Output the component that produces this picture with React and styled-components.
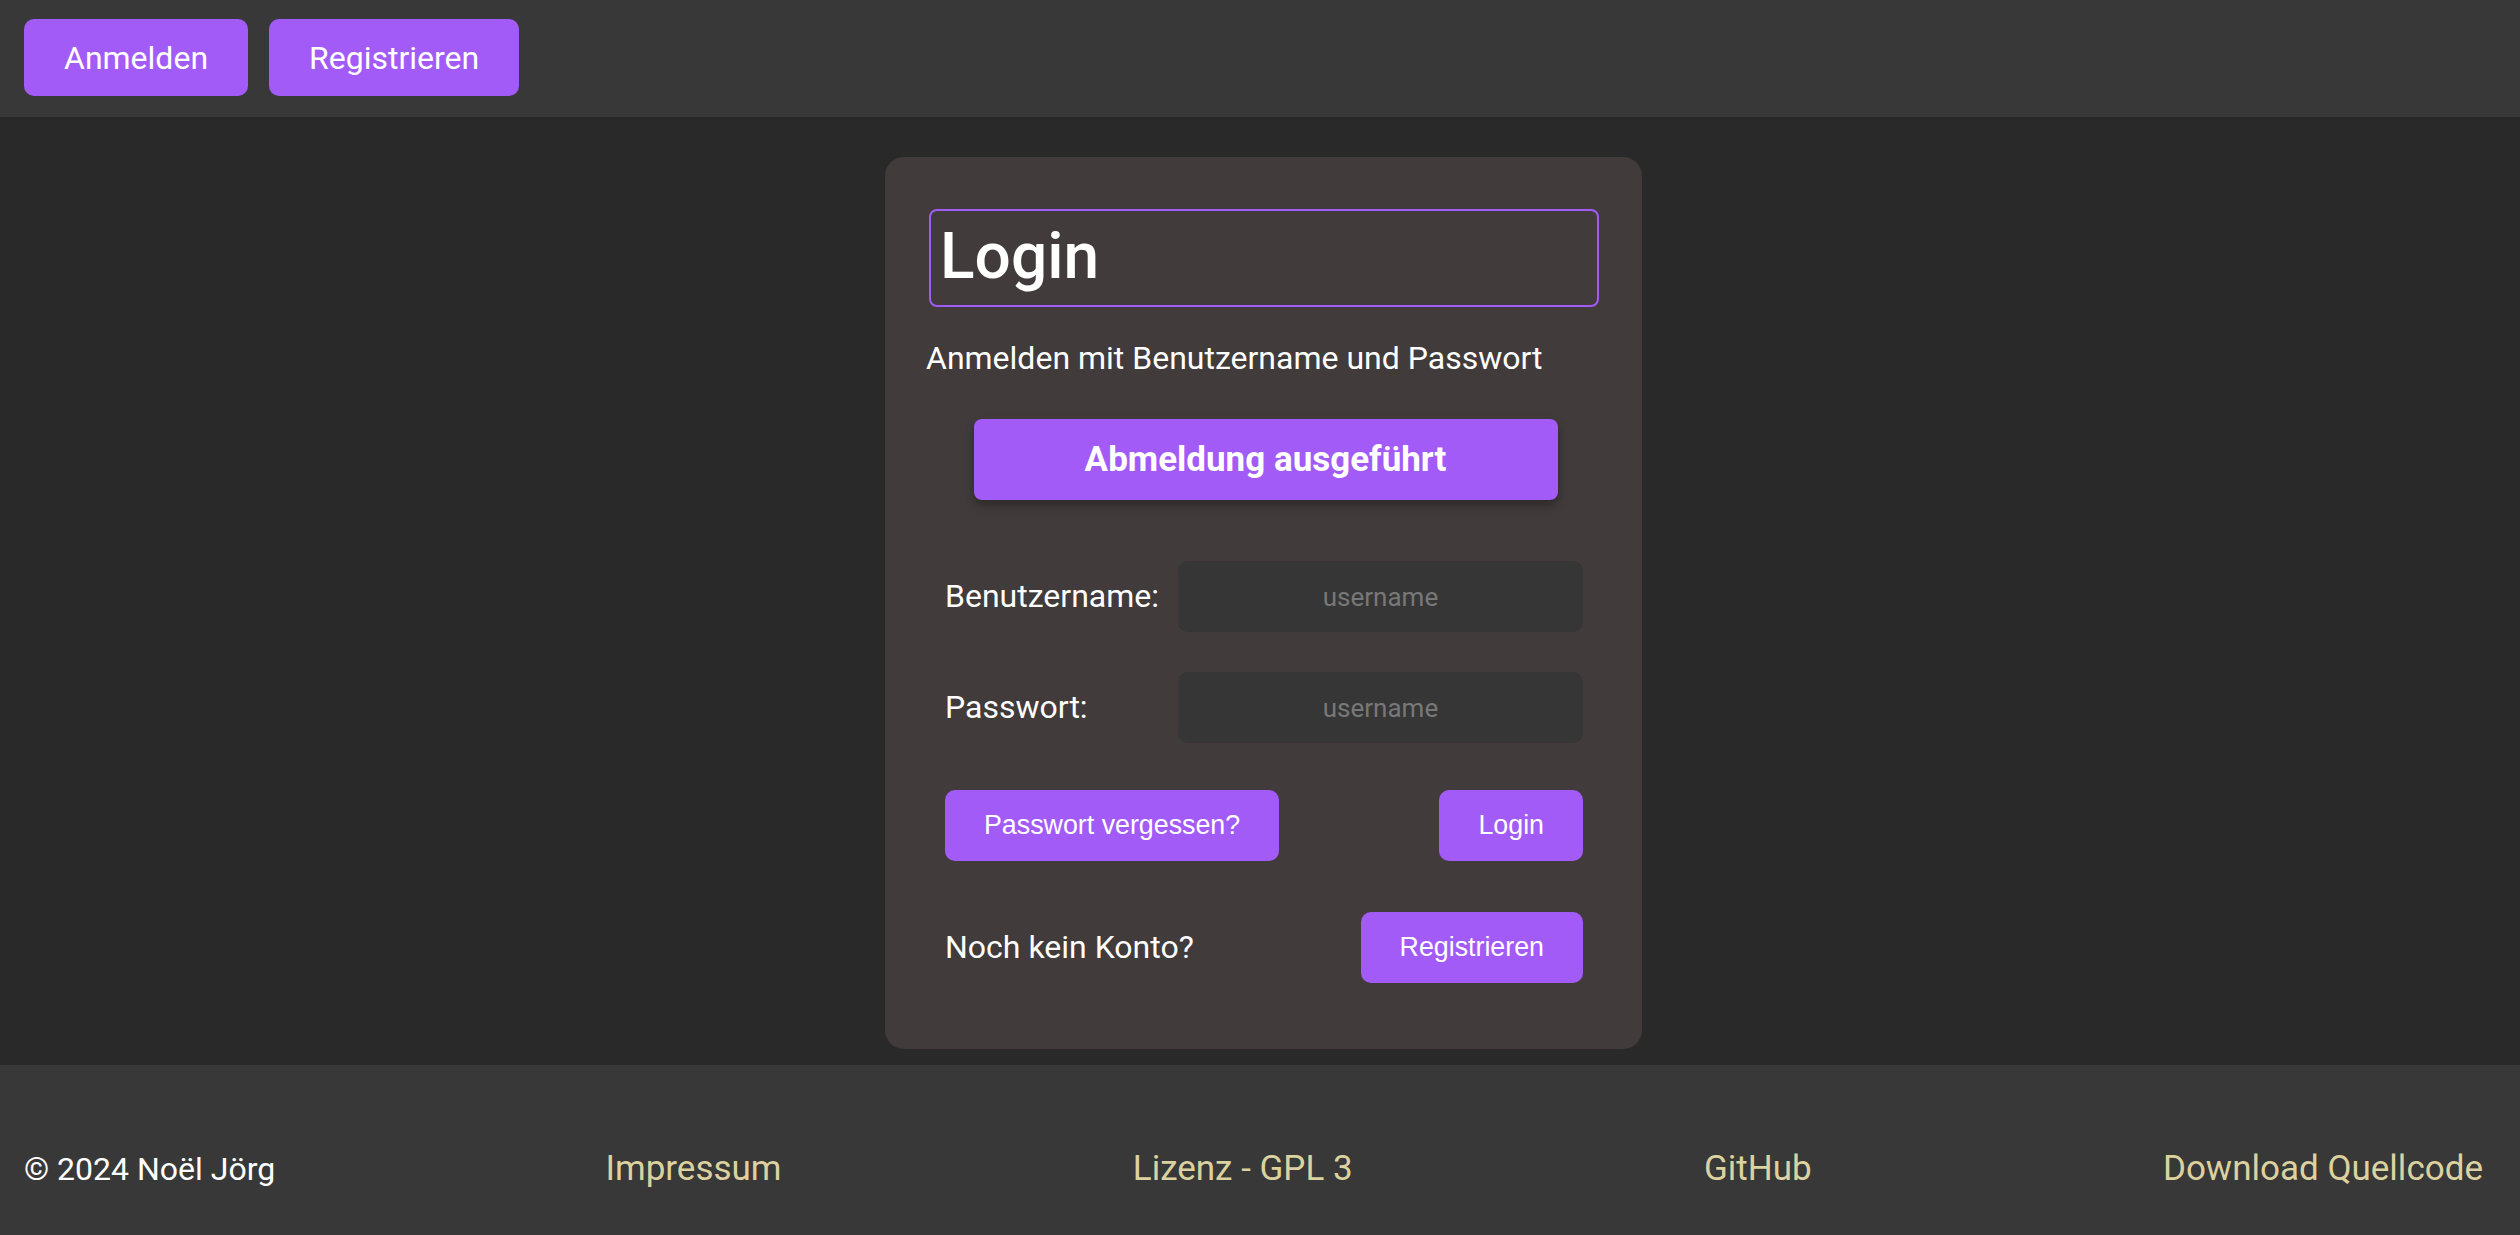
import React from 'react';
import styled, { createGlobalStyle } from 'styled-components';

const purple = '#a35bf8';

const Global = createGlobalStyle`
  html, body {
    margin: 0;
    padding: 0;
    background: #292929;
    color: #fff;
    font-family: Roboto, 'Liberation Sans', sans-serif;
    font-size: 32px;
  }
  * { box-sizing: border-box; }
`;

const TopBar = styled.header`
  height: 117px;
  background: #383838;
  padding: 19px 24px;
  display: flex;
  gap: 21px;
`;

const NavButton = styled.button`
  height: 77px;
  padding: 0 40px;
  border: none;
  border-radius: 10px;
  background: ${purple};
  color: #fff;
  font-family: Roboto, sans-serif;
  font-size: 32px;
  cursor: pointer;
`;

const Main = styled.main`
  padding: 40px 0 16px 7px;
  display: flex;
  justify-content: center;
`;

const Card = styled.section`
  width: 757px;
  background: #413b3b;
  border-radius: 19px;
  padding: 52px 43px 66px 41px;
  display: flex;
  flex-direction: column;
`;

const Title = styled.h1`
  margin: 0 0 0 3px;
  height: 98px;
  border: 2px solid ${purple};
  border-radius: 8px;
  padding: 0 9px;
  font-size: 64px;
  font-weight: 500;
  line-height: 92px;
`;

const Subtitle = styled.p`
  margin: 33px 0 0;
  font-size: 32px;
  line-height: 37px;
`;

const StatusButton = styled.button`
  align-self: center;
  margin: 42px 0 0 6px;
  width: 584px;
  height: 81px;
  border: none;
  border-radius: 8px;
  background: ${purple};
  color: #fff;
  font-family: Roboto, sans-serif;
  font-size: 35px;
  font-weight: 700;
  box-shadow: 0 5px 10px rgba(0, 0, 0, 0.3);
`;

const Form = styled.form`
  margin: 61px 16px 0 19px;
  display: flex;
  flex-direction: column;
`;

const Row = styled.div`
  display: flex;
  align-items: center;
  justify-content: ${p => (p.$spread ? 'space-between' : 'flex-start')};
  margin-top: ${p => p.$gap || 0}px;
`;

const Label = styled.label`
  width: 233px;
  font-size: 32px;
  line-height: 37px;
`;

const Text = styled.span`
  font-size: 32px;
  line-height: 37px;
`;

const Input = styled.input`
  width: 405px;
  height: 71px;
  border: none;
  border-radius: 10px;
  background: #363636;
  color: #fff;
  text-align: center;
  font-family: Roboto, sans-serif;
  font-size: 26px;
  outline: none;
  &::placeholder { color: #787878; }
`;

const FormButton = styled.button`
  height: 71px;
  padding: 0 39px;
  border: none;
  border-radius: 10px;
  background: ${purple};
  color: #fff;
  font-family: 'Liberation Sans', Arial, sans-serif;
  font-size: 26.8px;
  cursor: pointer;
`;

const Footer = styled.footer`
  height: 170px;
  background: #383838;
  padding: 85px 37px 0 24px;
  display: flex;
  align-items: baseline;
  justify-content: space-between;
  font-size: 32px;
  line-height: 37px;
`;

const Copyright = styled.span`
  margin-right: -21px;
`;

const FooterLink = styled.a`
  color: #dcd2a0;
  font-size: 35px;
  text-decoration: none;
`;

export default function App() {
  return (
    <>
      <Global />
      <TopBar>
        <NavButton>Anmelden</NavButton>
        <NavButton>Registrieren</NavButton>
      </TopBar>
      <Main>
        <Card>
          <Title>Login</Title>
          <Subtitle>Anmelden mit Benutzername und Passwort</Subtitle>
          <StatusButton>Abmeldung ausgeführt</StatusButton>
          <Form onSubmit={e => e.preventDefault()}>
            <Row>
              <Label htmlFor="user">Benutzername:</Label>
              <Input id="user" type="text" placeholder="username" />
            </Row>
            <Row $gap={40}>
              <Label htmlFor="pass">Passwort:</Label>
              <Input id="pass" type="password" placeholder="username" />
            </Row>
            <Row $gap={47} $spread>
              <FormButton type="button">Passwort vergessen?</FormButton>
              <FormButton type="submit">Login</FormButton>
            </Row>
            <Row $gap={51} $spread>
              <Text>Noch kein Konto?</Text>
              <FormButton type="button">Registrieren</FormButton>
            </Row>
          </Form>
        </Card>
      </Main>
      <Footer>
        <Copyright>© 2024 Noël Jörg</Copyright>
        <FooterLink href="#">Impressum</FooterLink>
        <FooterLink href="#">Lizenz - GPL 3</FooterLink>
        <FooterLink href="#">GitHub</FooterLink>
        <FooterLink href="#">Download Quellcode</FooterLink>
      </Footer>
    </>
  );
}
